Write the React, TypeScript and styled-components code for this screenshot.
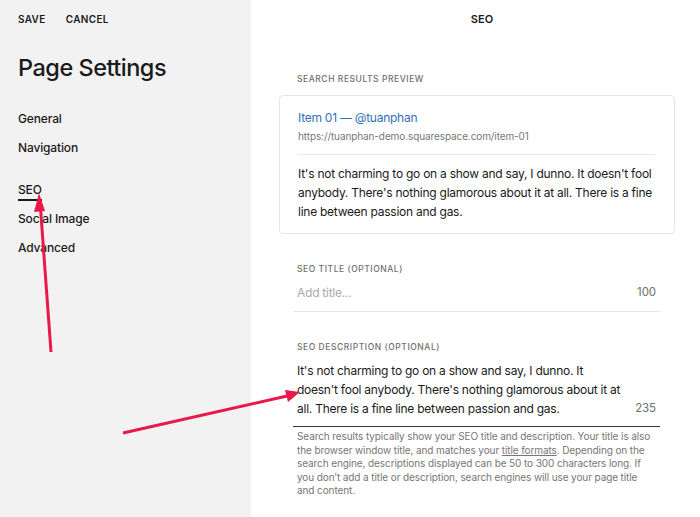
import React from 'react';
import styled, { createGlobalStyle } from 'styled-components';

const GlobalStyle = createGlobalStyle`
  html, body {
    margin: 0;
    padding: 0;
    background: #ffffff;
  }
  body {
    font-family: Inter, "Liberation Sans", Arial, sans-serif;
    color: #1a1a1a;
    -webkit-font-smoothing: antialiased;
  }
`;

const Page = styled.div`
  position: relative;
  display: flex;
  width: 700px;
  height: 517px;
  overflow: hidden;
`;

const Sidebar = styled.aside`
  width: 251px;
  flex-shrink: 0;
  background: #f2f2f2;
  padding: 0 18px;
  box-sizing: border-box;
`;

const TopActions = styled.div`
  display: flex;
  align-items: center;
  gap: 20px;
  height: 38px;
`;

const ActionButton = styled.button`
  border: none;
  background: none;
  padding: 0;
  font-family: inherit;
  font-size: 10px;
  font-weight: 600;
  letter-spacing: 0.35px;
  color: #1a1a1a;
  cursor: pointer;
`;

const Title = styled.h1`
  margin: 14px 0 0;
  font-size: 23.5px;
  line-height: 32px;
  font-weight: 500;
  letter-spacing: -0.5px;
`;

const NavList = styled.nav`
  display: flex;
  flex-direction: column;
  margin-top: 20px;
`;

const NavGroup = styled.div`
  display: flex;
  flex-direction: column;
  & + & {
    margin-top: 13px;
  }
`;

const NavItem = styled.a<{ $active?: boolean }>`
  align-self: flex-start;
  position: relative;
  font-size: 12px;
  line-height: 29px;
  font-weight: 500;
  letter-spacing: -0.15px;
  color: #1a1a1a;
  text-decoration: none;

  &::after {
    content: '';
    display: ${({ $active }) => ($active ? 'block' : 'none')};
    position: absolute;
    left: 0;
    right: 0;
    bottom: 3px;
    height: 2px;
    background: #1a1a1a;
  }
`;

const Main = styled.main`
  flex: 1;
  display: flex;
  flex-direction: column;
  padding: 0 25px 0 28px;
`;

const MainHeader = styled.div`
  height: 38px;
  display: flex;
  align-items: center;
  justify-content: center;
  padding-left: 10px;
  font-size: 11px;
  font-weight: 600;
`;

const SectionLabel = styled.div<{ $inset?: boolean }>`
  font-size: 8.5px;
  line-height: 14px;
  font-weight: 500;
  letter-spacing: 0.55px;
  color: #6f6f6f;
  text-transform: uppercase;
  margin-left: ${({ $inset }) => ($inset ? '4px' : '18px')};
`;

const PreviewLabel = styled(SectionLabel)`
  margin-top: 34px;
  margin-bottom: 9px;
`;

const PreviewCard = styled.div`
  border: 1px solid #e6e6e6;
  border-radius: 4px;
  padding: 12px 19px 12px 18px;
`;

const PreviewTitle = styled.div`
  color: #2f6fb8;
  font-size: 12px;
  line-height: 20px;
  letter-spacing: -0.25px;
`;

const PreviewUrl = styled.div`
  color: #777;
  font-size: 10px;
  line-height: 16px;
  letter-spacing: -0.1px;
  padding-bottom: 10px;
  border-bottom: 1px solid #e8e8e8;
`;

const PreviewText = styled.p`
  margin: 9px 0 0;
  font-size: 12px;
  line-height: 19px;
  letter-spacing: -0.25px;
  color: #1a1a1a;
`;

const Field = styled.div`
  margin: 28px 15px 0 14px;
`;

const FieldRow = styled.div<{ $strong?: boolean }>`
  display: flex;
  align-items: flex-end;
  justify-content: space-between;
  gap: 12px;
  margin-top: 7px;
  padding: 0 4px ${({ $strong }) => ($strong ? '8px' : '9px')};
  border-bottom: ${({ $strong }) => ($strong ? '1.5px solid #333' : '1px solid #e6e6e6')};
`;

const FieldValue = styled.div<{ $placeholder?: boolean }>`
  flex: 1;
  font-size: 12px;
  line-height: 19px;
  letter-spacing: -0.25px;
  color: ${({ $placeholder }) => ($placeholder ? '#a9a9a9' : '#1a1a1a')};
`;

const Counter = styled.span`
  font-size: 11.5px;
  line-height: 19px;
  letter-spacing: -0.1px;
  color: #6f6f6f;
`;

const HelpText = styled.p`
  margin: 3px 0 0;
  padding: 0 4px;
  font-size: 10px;
  line-height: 13.5px;
  letter-spacing: -0.1px;
  color: #767676;

  a {
    color: inherit;
    text-decoration: underline;
  }
`;

const Overlay = styled.svg`
  position: absolute;
  inset: 0;
  pointer-events: none;
`;

const description =
  "It's not charming to go on a show and say, I dunno. It doesn't fool anybody. There's nothing glamorous about it at all. There is a fine line between passion and gas.";

export default function App() {
  return (
    <>
      <GlobalStyle />
      <Page>
        <Sidebar>
          <TopActions>
            <ActionButton>SAVE</ActionButton>
            <ActionButton>CANCEL</ActionButton>
          </TopActions>
          <Title>Page Settings</Title>
          <NavList>
            <NavGroup>
              <NavItem>General</NavItem>
              <NavItem>Navigation</NavItem>
            </NavGroup>
            <NavGroup>
              <NavItem $active>SEO</NavItem>
              <NavItem>Social Image</NavItem>
              <NavItem>Advanced</NavItem>
            </NavGroup>
          </NavList>
        </Sidebar>

        <Main>
          <MainHeader>SEO</MainHeader>
          <PreviewLabel>Search Results Preview</PreviewLabel>
          <PreviewCard>
            <PreviewTitle>Item 01 — @tuanphan</PreviewTitle>
            <PreviewUrl>https://tuanphan-demo.squarespace.com/item-01</PreviewUrl>
            <PreviewText>{description}</PreviewText>
          </PreviewCard>

          <Field>
            <SectionLabel $inset>SEO Title (Optional)</SectionLabel>
            <FieldRow>
              <FieldValue $placeholder>Add title...</FieldValue>
              <Counter>100</Counter>
            </FieldRow>
          </Field>

          <Field>
            <SectionLabel $inset>SEO Description (Optional)</SectionLabel>
            <FieldRow $strong>
              <FieldValue>{description}</FieldValue>
              <Counter>235</Counter>
            </FieldRow>
            <HelpText>
              Search results typically show your SEO title and description. Your title is also
              the browser window title, and matches your <a>title formats</a>. Depending on the
              search engine, descriptions displayed can be 50 to 300 characters long. If you
              don’t add a title or description, search engines will use your page title and
              content.
            </HelpText>
          </Field>
        </Main>

        <Overlay width="700" height="517" viewBox="0 0 700 517">
          <line x1="51" y1="352" x2="40.5" y2="208" stroke="#e8194a" strokeWidth="3" />
          <polygon points="39,193 34,212 45,211" fill="#e8194a" />
          <line x1="123" y1="433" x2="287" y2="396" stroke="#e8194a" strokeWidth="3" />
          <polygon points="300,392 285,390 288,402" fill="#e8194a" />
        </Overlay>
      </Page>
    </>
  );
}
